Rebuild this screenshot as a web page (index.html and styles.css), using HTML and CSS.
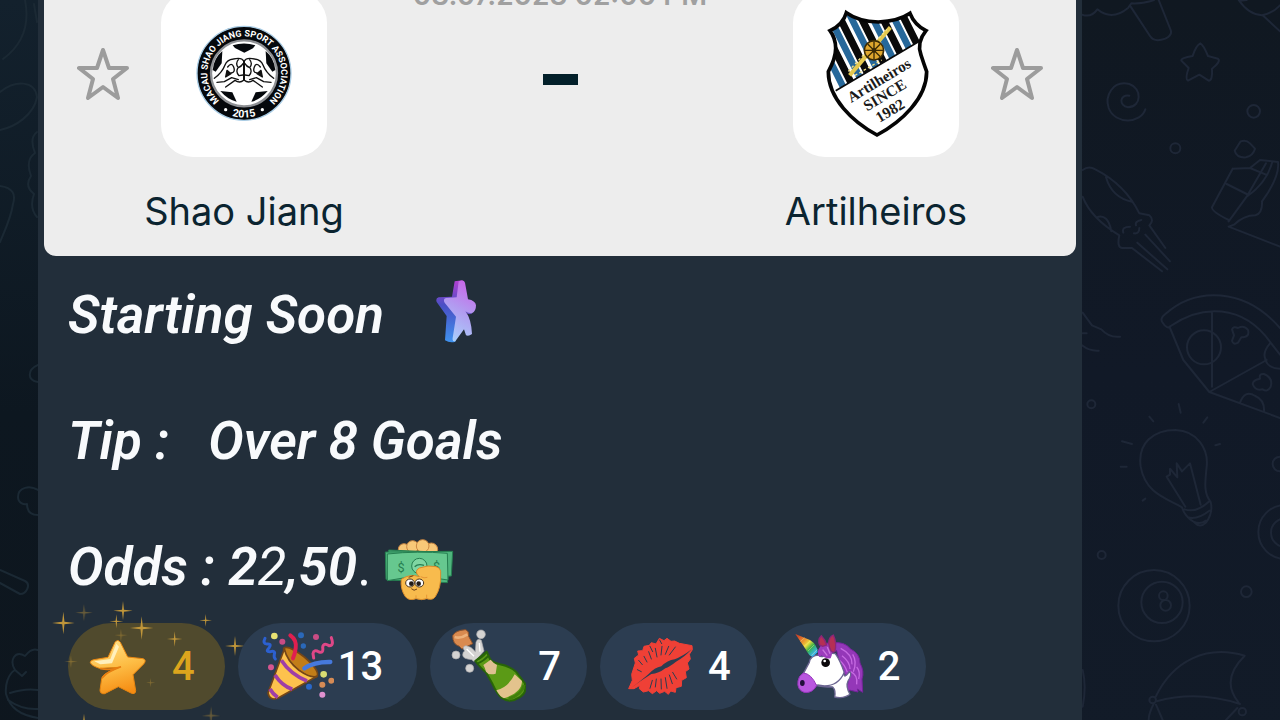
FILE: index.html
```html
<!DOCTYPE html>
<html lang="en">
<head>
    <meta charset="UTF-8">
    <title>Channel post</title>

    <link rel="stylesheet" href="styles.css">
</head>

<body>
    <div class="chat">
        <div class="wallpaper wallpaper-left">
            <svg width="38" height="720" viewBox="0 0 38 720" aria-hidden="true">
                <path d="M25 0C30 25 22 45 3 59M34 4L37 22"/>
                <path d="M0 92C15 80 35 80 37 97C34 115 15 127 0 130"/>
                <path d="M37 132Q29 138 35 153Q25 160 31 176Q24 186 34 194Q29 208 37 217"/>
                <path d="M0 186C13 188 16 194 13 204C11 218 5 230 0 242"/>
                <path d="M38 365C27 370 27 380 38 382"/>
                <path d="M38 490C30 485 18 487 18 497C18 503 24 505 27 504C27 511 31 515 38 515"/>
                <path d="M0 570L25 581C31 584 27 594 20 594L0 583"/>
                <path d="M38 650C33 648 28 652 25 656C15 650 9 660 15 670C8 674 5 685 6 694C10 708 20 715 38 718M10 693Q25 688 38 690M8 700Q22 710 38 709M15 670L22 676L26 672"/>
            </svg>
        </div>

        <main class="message">
            <section class="match">
                <button class="favorite" type="button" aria-label="Add Shao Jiang to favorites">
                    <svg width="52" height="54" viewBox="0 0 52 54"><path d="M26 3L32 21H50L36 32L41 51L26 40L11 51L16 32L2 21H20Z"/></svg>
                </button>
                <div class="team">
                    <div class="team-logo">
                        <svg width="166" height="166" viewBox="-72 -72 498 498" aria-hidden="true">
                            <defs>
                                <path id="ring-top" d="M177 286A111 111 0 1 1 178 286"/>
                                <path id="ring-bottom" d="M44 175A133 133 0 0 0 310 175"/>
                            </defs>
                            <circle cx="177" cy="175" r="141" fill="#05080c" stroke="#a9cde6" stroke-width="4"/>
                            <circle cx="177" cy="175" r="99" fill="#fff" stroke="#8e9094" stroke-width="7"/>
                            <g fill="#05080c">
                                <path d="M143 91Q177 80 211 91L204 100L178 113L150 99Z"/>
                                <path d="M112 108L110 145L92 170L83 165Q86 130 112 108Z"/>
                                <path d="M242 108L244 145L262 170L271 165Q268 130 242 108Z"/>
                                <path d="M106 228L142 232L155 260Q128 254 106 228Z"/>
                                <path d="M248 228L212 232L199 260Q226 254 248 228Z"/>
                            </g>
                            <g fill="#fff" stroke="#111" stroke-width="4" stroke-linejoin="round" stroke-linecap="round">
                                <path d="M88 190Q112 172 120 150Q126 134 145 132Q170 126 176 138L176 196Q164 206 150 196L122 216"/>
                                <path d="M266 190Q242 172 234 150Q228 134 209 132Q184 126 178 138L178 196Q190 206 204 196L232 216"/>
                                <path d="M160 134Q150 146 160 158Q170 154 174 146M194 134Q204 146 194 158Q184 154 180 146M158 160Q152 172 162 182L174 180M196 160Q202 172 192 182L180 180M128 156Q140 140 146 156Q152 172 138 174M226 156Q214 140 208 156Q202 172 216 174M96 202L118 200L140 188L160 194M258 202L236 200L214 188L194 194" fill="none"/>
                                <path d="M126 166L138 176L122 186Z" fill="#111"/>
                                <path d="M228 166L216 176L232 186Z" fill="#111"/>
                            </g>
                            <text class="ring-text"><textPath href="#ring-top" startOffset="50%">MACAU SHAO JIANG SPORT ASSOCIATION</textPath></text>
                            <text class="ring-text ring-year"><textPath href="#ring-bottom" startOffset="50%">2015</textPath></text>
                            <circle cx="122" cy="284" r="5" fill="#fff"/>
                            <circle cx="232" cy="284" r="5" fill="#fff"/>
                        </svg>
                    </div>
                    <h2>Shao Jiang</h2>
                </div>
                <div class="kickoff">
                    <time datetime="2023-07-03T14:00">03.07.2023 02:00 PM</time>
                    <span class="score-dash"></span>
                </div>
                <div class="team">
                    <div class="team-logo">
                        <svg width="166" height="166" viewBox="-66 -27 498 498" aria-hidden="true">
                            <defs>
                                <clipPath id="crest-top"><path d="M0 0H380V84L62 272L0 309Z"/></clipPath>
                                <clipPath id="crest"><path d="M94 38Q130 64 190 66Q250 64 285 40Q298 74 333 92Q304 128 318 165Q326 190 335 215C335 295 260 365 186 405C112 365 40 295 40 215Q62 175 62 145Q62 115 45 92Q84 74 94 38Z"/></clipPath>
                            </defs>
                            <g clip-path="url(#crest)">
                                <path fill="#fff" d="M0 0H380V420H0Z"/>
                                <g clip-path="url(#crest-top)" fill="none" stroke-width="22">
                                    <path stroke="#0a0a0a" d="M-6 20L134 300M58 20L198 300M122 20L262 300M186 20L326 300M250 20L390 300"/>
                                    <path stroke="#27689a" stroke-width="20" d="M-36 20L104 300M28 20L168 300M92 20L232 300M156 20L296 300M220 20L360 300"/>
                                    <path stroke="#e5c84f" stroke-width="12" d="M104 226L226 82"/>
                                    <path stroke="#f7e58a" stroke-width="4" stroke-dasharray="8 7" d="M100 214L216 88M120 226L200 180"/>
                                </g>
                                <path d="M62 272L318 121" stroke="#0a0a0a" stroke-width="5"/>
                            </g>
                            <circle cx="177" cy="151" r="29" fill="#dfa72e" stroke="#3a2a05" stroke-width="5"/>
                            <path d="M177 124V178M150 151H204M158 132L196 170M196 132L158 170" stroke="#3a2a05" stroke-width="4"/>
                            <circle cx="177" cy="151" r="7" fill="#3a2a05"/>
                            <path d="M94 38Q130 64 190 66Q250 64 285 40Q298 74 333 92Q304 128 318 165Q326 190 335 215C335 295 260 365 186 405C112 365 40 295 40 215Q62 175 62 145Q62 115 45 92Q84 74 94 38Z" fill="none" stroke="#050505" stroke-width="11"/>
                            <g class="crest-text">
                                <text transform="translate(200 254) rotate(-31)">Artilheiros</text>
                                <text transform="translate(217 298) rotate(-31)">SINCE</text>
                                <text transform="translate(233 345) rotate(-31)">1982</text>
                            </g>
                        </svg>
                    </div>
                    <h2>Artilheiros</h2>
                </div>
                <button class="favorite" type="button" aria-label="Add Artilheiros to favorites">
                    <svg width="52" height="54" viewBox="0 0 52 54"><path d="M26 3L32 21H50L36 32L41 51L26 40L11 51L16 32L2 21H20Z"/></svg>
                </button>
            </section>

            <section class="caption">
                <p>Starting Soon
                    <svg class="emoji emoji-star" width="40" height="63" viewBox="1188 30 120 189" aria-hidden="true">
                        <defs>
                            <linearGradient id="star-face" x1="0.6" y1="0" x2="0.3" y2="1">
                                <stop offset="0" stop-color="#c868e8"/>
                                <stop offset="0.45" stop-color="#b29af0"/>
                                <stop offset="1" stop-color="#a9d0fb"/>
                            </linearGradient>
                            <linearGradient id="star-side" x1="0" y1="0" x2="0" y2="1">
                                <stop offset="0" stop-color="#b43fd0"/>
                                <stop offset="0.4" stop-color="#4a4fc4"/>
                                <stop offset="1" stop-color="#3f92ee"/>
                            </linearGradient>
                        </defs>
                        <path fill="url(#star-side)" d="M1244 34L1268 31L1262 84L1256 130L1246 215Q1230 220 1215 211L1220 138L1190 96Q1186 84 1196 82L1236 80Z"/>
                        <path fill="url(#star-face)" d="M1256 34Q1272 28 1275 38L1284 88Q1306 92 1308 106Q1308 124 1296 130Q1284 132 1278 126Q1294 148 1296 192Q1286 200 1278 196L1272 178L1246 214Q1236 216 1238 204L1248 140L1214 98Q1208 86 1218 84L1250 82Z"/>
                        <path fill="#6b55c8" d="M1276 124Q1286 132 1298 128L1290 133Q1280 133 1276 124Z"/>
                    </svg>
                </p>
                <p>Tip :   Over 8 Goals</p>
                <p>Odds : 2<span class="light">2</span>,50<span class="light upright">.</span> <svg class="emoji" width="70" height="63" viewBox="1050 52 210 189" aria-hidden="true">
                        <g fill="#f8c878" stroke="#c98642" stroke-width="3">
                            <circle cx="1110" cy="86" r="17"/>
                            <circle cx="1192" cy="86" r="19"/>
                            <circle cx="1136" cy="78" r="18"/>
                            <circle cx="1166" cy="76" r="19"/>
                        </g>
                        <g stroke="#257e50" stroke-width="3" fill="#4fb57d">
                            <path d="M1064 88L1252 96L1240 186L1060 178Z"/>
                            <path d="M1054 94L1256 92L1252 166L1056 176Z"/>
                            <path fill="#66c88f" d="M1060 100Q1150 90 1240 98L1242 178Q1150 160 1060 180Z"/>
                            <circle cx="1156" cy="136" r="23" fill="#7fd6a2"/>
                        </g>
                        <text class="dollar" x="1101" y="155">$</text>
                        <text class="dollar" x="1208" y="152">$</text>
                        <path d="M1142 138Q1152 128 1170 134M1160 142H1172" fill="none" stroke="#257e50" stroke-width="4"/>
                        <path fill="#f8bb4d" stroke="#d98b2b" stroke-width="3" d="M1102 176Q1128 158 1156 168Q1138 152 1156 142Q1182 132 1206 138Q1222 142 1220 160Q1222 200 1204 228Q1196 240 1178 234Q1164 240 1146 234Q1126 242 1114 228Q1098 204 1102 176Z"/>
                        <path fill="none" stroke="#e79735" stroke-width="3" d="M1160 168Q1170 174 1180 170M1146 234V224M1178 234V222"/>
                        <ellipse cx="1128" cy="187" rx="13" ry="12" fill="#fff" stroke="#47331e" stroke-width="3"/>
                        <ellipse cx="1156" cy="187" rx="13" ry="12" fill="#fff" stroke="#47331e" stroke-width="3"/>
                        <circle cx="1132" cy="189" r="7" fill="#221a15"/>
                        <circle cx="1154" cy="189" r="7" fill="#221a15"/>
                        <path fill="none" stroke="#6d3e13" stroke-width="3" d="M1132 204Q1140 213 1149 205M1124 170L1138 165"/>
                    </svg></p>
            </section>

            <div class="reactions">
                <button class="reaction reaction-paid" type="button" aria-label="Star, 4">
                    <svg class="reaction-icon" viewBox="144 100 228 228" aria-hidden="true">
                        <defs>
                            <linearGradient id="gold" x1="0.3" y1="0" x2="0.6" y2="1">
                                <stop offset="0" stop-color="#ffdf85"/>
                                <stop offset="0.5" stop-color="#fdbd45"/>
                                <stop offset="1" stop-color="#f58c12"/>
                            </linearGradient>
                        </defs>
                        <path fill="url(#gold)" stroke="#e8850f" stroke-width="3" stroke-linejoin="round" d="M225 140Q233 129 241 140L263 184L309 189Q321 193 311 205L279 237L287 285Q286 298 273 292L235 273L194 294Q181 296 180 284L185 249Q187 238 205 229L238 215L178 218Q155 210 151 201Q151 193 162 192L204 185Z"/>
                        <path fill="#fff0bd" d="M229 144L211 190L163 197L181 206L216 203L237 153Z"/>
                        <path fill="none" stroke="#e67d10" stroke-width="5" stroke-linecap="round" d="M182 219Q212 225 243 213Q199 229 187 246"/>
                    </svg>
                    <span class="count">4</span>
                    <svg class="sparkles" width="200" height="120" viewBox="30 15 600 360" aria-hidden="true">
                        <defs><path id="sparkle" d="M0 -10L1 -1L10 0L1 1L0 10L-1 1L-10 0L-1 -1Z"/></defs>
                        <use href="#sparkle" transform="translate(70 84) scale(3.4)"/>
                        <use href="#sparkle" transform="translate(249 47) scale(2.9)"/>
                        <use href="#sparkle" transform="translate(229 79) scale(2.1)"/>
                        <use href="#sparkle" transform="translate(305 99) scale(3.5)"/>
                        <use href="#sparkle" transform="translate(497 76) scale(1.9)"/>
                        <use href="#sparkle" transform="translate(585 153) scale(3)"/>
                        <use href="#sparkle" transform="translate(404 132) scale(2.3)"/>
                        <g opacity="0.45">
                            <use href="#sparkle" transform="translate(132 53) scale(2.6)"/>
                            <use href="#sparkle" transform="translate(93 200) scale(2)"/>
                            <use href="#sparkle" transform="translate(332 263) scale(1.4)"/>
                            <use href="#sparkle" transform="translate(243 121) scale(2)"/>
                            <use href="#sparkle" transform="translate(513 362) scale(2.8)"/>
                        </g>
                        <use href="#sparkle" transform="translate(132 378) scale(2.2)"/>
                    </svg>
                </button>
                <button class="reaction reaction-wide" type="button" aria-label="Party popper, 13">
                    <svg class="reaction-icon" viewBox="651 100 228 228" aria-hidden="true">
                        <path fill="#c27d18" stroke="#754617" stroke-width="5" d="M728 158Q740 146 790 184Q838 226 828 242Q816 254 774 224Q726 184 728 158Z"/>
                        <path fill="#fdc24d" stroke="#754617" stroke-width="5" stroke-linejoin="round" d="M730 160Q738 196 774 224Q808 248 828 242L710 308Q686 316 681 292Z"/>
                        <path fill="none" stroke="#9f3ea6" stroke-width="11" d="M721 194Q748 236 798 256M702 238Q722 270 754 281M687 280Q696 296 710 305"/>
                        <path fill="none" stroke="#e01f4f" stroke-width="12" stroke-linecap="round" d="M748 119Q768 133 764 158Q762 174 756 188"/>
                        <path fill="none" stroke="#4679dc" stroke-width="13" stroke-linecap="round" d="M868 199Q820 198 790 218"/>
                        <path fill="none" stroke="#2c60d0" stroke-width="9" stroke-linecap="round" d="M672 128Q664 144 678 145Q694 143 684 157Q672 169 688 168Q704 164 700 176Q698 185 703 190"/>
                        <path fill="none" stroke="#df4787" stroke-width="9" stroke-linecap="round" d="M871 126Q880 151 864 150Q847 140 845 155Q848 174 834 169Q818 160 816 174L818 187"/>
                        <circle cx="700" cy="121" r="10" fill="#e8e273"/>
                        <circle cx="848" cy="236" r="10" fill="#d9dc72"/>
                        <circle cx="724" cy="138" r="9" fill="#c94c84"/>
                        <circle cx="825" cy="124" r="9" fill="#c94c84"/>
                        <circle cx="690" cy="215" r="9" fill="#d65690"/>
                        <circle cx="780" cy="119" r="9" fill="#2a68b9"/>
                        <circle cx="787" cy="151" r="8" fill="#2a68b9"/>
                        <circle cx="804" cy="273" r="9" fill="#2a68c9"/>
                        <circle cx="844" cy="267" r="9" fill="#d58b55"/>
                        <circle cx="871" cy="255" r="9" fill="#d58b55"/>
                        <circle cx="844" cy="297" r="9" fill="#df91cf"/>
                    </svg>
                    <span class="count">13</span>
                </button>
                <button class="reaction" type="button" aria-label="Champagne, 7">
                    <svg class="reaction-icon" viewBox="90 56 228 228" aria-hidden="true">
                        <path fill="#d98a4f" stroke="#8c522b" stroke-width="3" d="M98 76Q106 60 136 58Q148 62 146 78L158 100L126 116L118 108Q98 102 98 76Z"/>
                        <path fill="none" stroke="#edb17a" stroke-width="8" d="M104 80Q122 86 142 72"/>
                        <g fill="#d4d3d2" stroke="#aaa9aa" stroke-width="2">
                            <circle cx="183" cy="72" r="13"/>
                            <circle cx="108" cy="134" r="12"/>
                            <circle cx="149" cy="174" r="12"/>
                            <path d="M168 96Q172 82 184 90L192 122L168 150Q160 156 156 148Q128 146 128 134Q128 124 134 122Q124 108 138 106Q154 108 166 124Z"/>
                        </g>
                        <path fill="none" stroke="#fff" stroke-width="4" d="M140 116L162 138M178 98L180 124"/>
                        <path fill="#5b9a16" stroke="#286508" stroke-width="6" stroke-linejoin="round" d="M166 152L200 124L210 146Q216 156 240 162Q270 168 288 184L314 218Q324 250 292 264Q270 280 244 262Q230 248 218 222L198 186Q184 176 166 152Z"/>
                        <path fill="#dfc091" d="M190 164L212 148Q220 158 231 164L227 190Q206 196 198 184Q196 174 190 164Z"/>
                        <path fill="#e3c38d" d="M229 240Q266 230 284 192L306 212Q306 246 252 264Q240 260 229 240Z"/>
                        <path fill="none" stroke="#286508" stroke-width="5" d="M171 160Q192 152 206 136M168 150Q186 144 200 126"/>
                        <path fill="none" stroke="#417f0c" stroke-width="9" d="M312 224Q306 252 266 266"/>
                    </svg>
                    <span class="count">7</span>
                </button>
                <button class="reaction" type="button" aria-label="Kiss mark, 4">
                    <svg class="reaction-icon" viewBox="600 56 228 228" aria-hidden="true">
                        <path fill="#ef4036" stroke="#ef4036" stroke-width="3" stroke-linejoin="round" d="M626 235L637 210L635 192L646 158L643 144L656 134L653 122L668 121L672 108L688 105L694 97L708 101L718 84L732 91L741 84L753 93L764 92L778 99L816 106L817 118L808 132L811 146L802 158L807 176L796 184L799 202L785 210L784 228L768 232L766 246L752 242L745 252L734 243L719 249L710 241L697 250L686 241L670 245L658 235L660 225L642 235Z"/>
                        <path fill="#2c3d51" d="M632 234Q664 210 686 191Q704 172 724 168Q742 150 764 147Q788 138 815 117Q792 142 768 154Q748 170 736 174Q716 190 694 191Q662 211 632 234Z"/>
                        <path fill="none" stroke="#2c3d51" stroke-width="3" stroke-linecap="round" d="M656 150L667 163M672 138L681 155M686 124L694 146M706 114L711 140M726 108L723 134M746 108L736 132M766 110L748 134M652 178L664 184M690 108L698 124M690 234L697 210M706 230L709 206M724 236L723 206M741 234L736 202M757 220L748 194M770 206L758 186M719 89L725 100"/>
                    </svg>
                    <span class="count">4</span>
                </button>
                <button class="reaction" type="button" aria-label="Unicorn, 2">
                    <svg class="reaction-icon" viewBox="1110 56 228 228" aria-hidden="true">
                        <defs>
                            <linearGradient id="horn" x1="0" y1="0" x2="1" y2="1">
                                <stop offset="0.1" stop-color="#ce4526"/>
                                <stop offset="0.35" stop-color="#ed9930"/>
                                <stop offset="0.5" stop-color="#e9dd3c"/>
                                <stop offset="0.65" stop-color="#35b04b"/>
                                <stop offset="0.85" stop-color="#38b5ed"/>
                            </linearGradient>
                        </defs>
                        <path fill="#9437b8" stroke="#75239c" stroke-width="3" d="M1202 112Q1216 94 1238 98Q1272 92 1292 116Q1320 130 1320 158Q1334 184 1326 206L1328 246L1312 236L1314 245L1292 240L1280 240L1286 204L1264 180L1250 120L1212 142Q1194 132 1202 112Z"/>
                        <path fill="none" stroke="#c66ae2" stroke-width="4" d="M1262 114Q1298 132 1296 162M1266 136Q1290 154 1290 176M1298 132Q1312 154 1300 184M1292 184Q1314 194 1310 222M1310 170Q1322 184 1316 206M1258 150Q1274 162 1282 186"/>
                        <path fill="#fff" stroke="#6b6591" stroke-width="4" stroke-linejoin="round" d="M1168 156Q1172 134 1196 134Q1206 146 1224 128L1246 130Q1260 150 1272 184Q1270 210 1288 184Q1298 190 1284 212Q1276 228 1290 252Q1272 266 1244 260Q1248 240 1238 230Q1206 230 1186 224L1150 190Z"/>
                        <path fill="none" stroke="#6b6591" stroke-width="4" d="M1192 224Q1250 236 1272 188"/>
                        <path fill="#b957df" stroke="#9734bd" stroke-width="3" d="M1150 188Q1174 190 1190 226Q1176 250 1152 246Q1130 238 1134 212Q1136 196 1150 188Z"/>
                        <ellipse cx="1147" cy="218" rx="7" ry="9" fill="#210e3b"/>
                        <circle cx="1217" cy="157" r="13" fill="#0b090b"/>
                        <circle cx="1214" cy="152" r="4" fill="#fff"/>
                        <path fill="#9c3dbd" d="M1200 110Q1210 88 1230 108Q1242 120 1232 144Q1214 146 1206 134L1198 140Q1188 126 1200 110Z"/>
                        <path fill="#b52f55" stroke="#8c2679" stroke-width="4" d="M1199 104Q1192 88 1204 76Q1216 88 1220 104L1208 108ZM1226 98Q1226 80 1240 74Q1252 100 1244 124Q1230 130 1226 98Z"/>
                        <path fill="none" stroke="#cb77df" stroke-width="4" d="M1208 118L1222 136M1222 110L1230 130"/>
                        <path fill="url(#horn)" d="M1126 71L1170 89Q1192 103 1193 126L1178 139Q1166 136 1158 118Z"/>
                        <path fill="none" stroke="#fff6a0" stroke-width="2" opacity="0.6" d="M1141 94L1154 82M1152 108L1170 92M1164 122L1182 104M1174 136L1192 118"/>
                    </svg>
                    <span class="count">2</span>
                </button>
            </div>
        </main>

        <div class="wallpaper wallpaper-right">
            <svg width="198" height="720" viewBox="6 0 594 2160" aria-hidden="true">
                <path d="M6 44Q34 54 52 28Q96 64 144 24L154 10Q190 12 222 0M152 20L210 108Q222 128 256 116Q278 106 272 90L236 0"/>
                <path d="M476 0Q506 44 546 46Q580 38 600 16M548 46L600 94M480 2L500 0"/>
                <path d="M361 130Q370 134 384 168L414 176Q424 184 396 206Q398 242 386 242L358 224L324 242Q314 238 326 204L304 182Q302 174 338 168Q348 136 361 130Z"/>
                <path d="M148 287C118 282 116 318 144 322C186 320 186 264 148 252C98 240 74 288 86 324C106 376 184 370 196 328"/>
                <circle cx="521" cy="334" r="19"/>
                <circle cx="286" cy="445" r="15"/>
                <path d="M464 452L482 424Q498 418 510 430L525 446Q520 466 498 472Q470 474 464 452Z"/>
                <path d="M458 506L396 622Q394 634 446 660M458 506L510 504L540 480L594 486Q600 530 546 604Q548 640 526 646Q492 646 462 674L446 680M440 552L500 582M558 490L500 590L446 664M576 488Q560 548 500 590M510 504L558 524M446 680L600 740"/>
                <path d="M8 510Q26 496 46 508Q136 554 178 640L208 646Q224 660 208 676L256 744M8 590Q32 654 118 706Q110 742 126 744L156 744L246 814M78 532Q96 594 158 606M50 652Q84 640 94 694M196 704L270 784M172 728L262 808M130 698Q124 680 150 680M162 700Q178 702 178 684M168 676Q164 664 184 660"/>
                <path d="M8 938L36 976L64 988Q88 1014 120 1010M6 1036Q28 1054 56 1052M8 1000H20"/>
                <path d="M248 968Q238 956 256 942C348 860 494 862 600 984M248 968Q262 990 272 978C364 914 488 910 572 1028L600 1064M270 984L310 1080L388 1176L600 1254M396 936V1160M388 1176L560 1080M572 1028Q544 1060 558 1080"/>
                <path d="M480 1208Q494 1168 526 1188Q554 1200 552 1234M600 1106Q566 1106 556 1080"/>
                <circle cx="372" cy="1042" r="51"/>
                <path d="M456 988Q460 978 474 984Q492 974 504 990Q510 1012 484 1012L474 1028Q460 1036 456 1022L462 1006ZM520 1146Q526 1138 540 1136Q536 1120 552 1122Q580 1134 572 1160Q562 1178 548 1168Q526 1174 518 1152Z"/>
                <circle cx="34" cy="1213" r="12"/>
                <path d="M306 1522C258 1494 196 1480 182 1400C172 1328 222 1290 286 1290C354 1292 386 1350 380 1400C374 1454 372 1480 392 1506Q400 1538 378 1568Q360 1586 342 1566Q314 1550 306 1522ZM314 1528Q350 1540 388 1504M324 1552Q352 1560 388 1532M342 1566Q362 1574 378 1562M316 1520L260 1430L270 1424L270 1406L292 1432L290 1390L306 1414L330 1390L362 1514"/>
                <path d="M296 1212L302 1238M208 1250L220 1264M370 1268L382 1252M126 1324L156 1332M122 1400H140M406 1336L420 1332M188 1502L196 1496"/>
                <circle cx="600" cy="1392" r="22"/>
                <circle cx="616" cy="1596" r="81"/>
                <circle cx="616" cy="1598" r="43"/>
                <circle cx="65" cy="1665" r="12"/>
                <circle cx="222" cy="1817" r="107"/>
                <circle cx="246" cy="1807" r="62"/>
                <circle cx="250" cy="1787" r="13"/>
                <circle cx="257" cy="1816" r="16"/>
                <circle cx="499" cy="1775" r="16"/>
                <path d="M226 2092C280 1980 380 1934 494 1967Q420 2040 476 2108M230 2104Q350 2070 480 2112M222 2110Q206 2140 206 2160M228 2114L248 2160M472 2124L438 2160"/>
                <circle cx="218" cy="2100" r="10"/>
                <circle cx="487" cy="2135" r="11"/>
                <path d="M8 2010Q20 2060 8 2120"/>
            </svg>
        </div>
    </div>
</body>
</html>
```

FILE: styles.css
```css
* {
    box-sizing: border-box;
}

body {
    margin: 0;
    overflow: hidden;
    background: #111a25;
    font-family: Roboto, "Noto Sans", sans-serif;
}

button {
    border: 0;
    padding: 0;
    background: none;
    font: inherit;
    cursor: pointer;
}

svg {
    display: block;
}

.chat {
    display: grid;
    grid-template-columns: 38px minmax(0, 1fr) 198px;
    height: 100vh;
    overflow: hidden;
}

.wallpaper {
    overflow: hidden;
}

.wallpaper svg {
    fill: none;
    stroke-linecap: round;
    stroke-linejoin: round;
}

.wallpaper-left {
    background: linear-gradient(#13212d, #0d1720 55%, #0e161e);
}

.wallpaper-left svg {
    stroke: #1b2934;
    stroke-width: 2;
}

.wallpaper-right {
    background: linear-gradient(#101821, #111927 50%, #121b28);
}

.wallpaper-right svg {
    stroke: #1e2737;
    stroke-width: 6;
}

/* the post is scrolled, its first lines are above the window */
.message {
    margin-top: -24px;
    padding: 0 6px;
    background: #222e3a;
}

.match {
    display: grid;
    grid-template-columns: 52px 166px minmax(0, 1fr) 166px 52px;
    column-gap: 32px;
    height: 280px;
    padding: 15px 33px 0;
    border-radius: 0 0 12px 12px;
    background: #ededed;
    color: #0b2430;
}

.favorite {
    align-self: start;
    margin-top: 56px;
}

.favorite path {
    fill: none;
    stroke: #9c9c9c;
    stroke-width: 4;
    stroke-linejoin: round;
}

.team {
    display: flex;
    flex-direction: column;
    align-items: center;
}

.team-logo {
    border-radius: 32px;
    background: #fff;
}

.team h2 {
    margin: 32px 0 0;
    font: 400 38px/44px Inter, sans-serif;
    white-space: nowrap;
}

.ring-text {
    fill: #fff;
    font: bold 27px Roboto, sans-serif;
    text-anchor: middle;
}

.ring-year {
    font-size: 32px;
}

.crest-text {
    fill: #1a1a1a;
    font: bold 46px "Liberation Serif", serif;
    text-anchor: middle;
}

.kickoff {
    display: flex;
    flex-direction: column;
    align-items: center;
}

.kickoff time {
    margin-top: -12px;
    color: #a0a0a0;
    font: 600 28px/32px Inter, sans-serif;
    white-space: nowrap;
}

.score-dash {
    width: 35px;
    height: 11px;
    margin-top: 63px;
    background: #03202a;
}

.caption {
    padding: 28px 24px 0;
    color: #f8fafc;
    font-size: 53px;
    font-style: italic;
    font-weight: 600;
    line-height: 63px;
}

.caption p {
    margin: 0 0 63px;
    white-space: pre-wrap;
}

.caption p:first-child {
    display: flex;
    gap: 52px;
    white-space: normal;
}

.caption p:last-child {
    margin-bottom: 24px;
}

.caption .light {
    font-weight: 400;
}

.caption .upright {
    font-style: normal;
}

.emoji {
    display: inline-block;
    margin: -8px 0;
    vertical-align: -8px;
}

.emoji-star {
    margin: -4px 0 0;
}

.dollar {
    fill: #257e50;
    font: 38px Roboto, sans-serif;
    text-anchor: middle;
}

.reactions {
    display: flex;
    flex-wrap: wrap;
    gap: 13px;
    padding: 0 24px 40px;
}

.reaction {
    position: relative;
    display: flex;
    align-items: center;
    gap: 12px;
    height: 87px;
    padding: 0 26px 0 20px;
    border-radius: 44px;
    background: #2c3d51;
    color: #fff;
    font-size: 40px;
    font-weight: 500;
}

.reaction-icon {
    width: 76px;
    height: 76px;
}

.reaction-paid {
    gap: 8px;
    padding-right: 30px;
    background: #504a2d;
    color: #dca51d;
}

.reaction-wide {
    gap: 4px;
    padding-right: 34px;
}

.sparkles {
    position: absolute;
    left: -18px;
    top: -23px;
    fill: #c0963a;
    pointer-events: none;
}
```
